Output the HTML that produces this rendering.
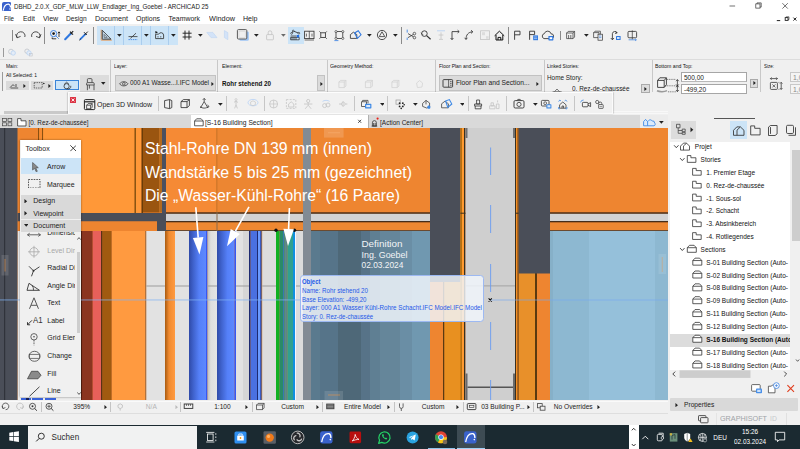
<!DOCTYPE html>
<html><head><meta charset="utf-8"><title>ARCHICAD</title>
<style>
html,body{margin:0;padding:0}
body{width:800px;height:449px;overflow:hidden;position:relative;background:#f0f0f0;font-family:"Liberation Sans",sans-serif}
.t{position:absolute;white-space:nowrap;margin:0;padding:0}
.r{position:absolute;box-sizing:border-box;display:block}
</style></head><body>
<div class="r" style="left:0.00px;top:0.00px;width:800.00px;height:24.00px;background:#ffffff;"></div><div class="r" style="left:0.00px;top:24.00px;width:800.00px;height:91.00px;background:#f0f0f0;"></div><div class="r" style="left:0.00px;top:115.00px;width:668.00px;height:13.00px;background:#d6d6d6;"></div><div class="r" style="left:0.00px;top:400.30px;width:800.00px;height:26.00px;background:#f0f0f0;"></div><div class="r" style="left:0.00px;top:400.60px;width:668.00px;height:0.80px;background:#fafafa;"></div><div class="r" style="left:0.00px;top:412.60px;width:668.00px;height:0.80px;background:#dedede;"></div><div class="r" style="left:0.00px;top:425.40px;width:800.00px;height:23.60px;background:#1b2a31;"></div><svg class="r" style="left:0.00px;top:128.00px;" width="668" height="272" viewBox="0 128 668 272"><defs>
<linearGradient id="gb" x1="0" x2="1" y1="0" y2="0"><stop offset="0" stop-color="#2f4aa8"/><stop offset="0.25" stop-color="#3f62cc"/><stop offset="0.6" stop-color="#5580f8"/><stop offset="1" stop-color="#5d88ff"/></linearGradient>
<linearGradient id="go" x1="0" x2="1" y1="0" y2="0"><stop offset="0" stop-color="#a85a10"/><stop offset="0.4" stop-color="#f08a30"/><stop offset="1" stop-color="#ff9a40"/></linearGradient>
<linearGradient id="gg" x1="0" x2="1" y1="0" y2="0"><stop offset="0" stop-color="#bdbdbd"/><stop offset="0.35" stop-color="#dedede"/><stop offset="1" stop-color="#e4e4e4"/></linearGradient>
</defs><rect x="0" y="128" width="668.00" height="272.00" fill="#ee8530"/><rect x="17.5" y="128" width="20.50" height="103.00" fill="#ee8530"/><rect x="38" y="128" width="1.20" height="85.00" fill="#8a5010"/><rect x="39.2" y="128" width="2.80" height="85.00" fill="#f58a30"/><rect x="42" y="128" width="1.20" height="85.00" fill="#8a5010"/><rect x="43.2" y="128" width="91.30" height="85.00" fill="#ff9838"/><rect x="134.5" y="128" width="1.50" height="85.00" fill="#8a5512"/><rect x="136" y="128" width="5.50" height="85.00" fill="#ff9838"/><rect x="141.5" y="128" width="1.50" height="85.00" fill="#6a3c08"/><rect x="143" y="128" width="16.40" height="84.50" fill="#9a5510"/><rect x="159.4" y="128" width="2.60" height="84.50" fill="#b06a20"/><rect x="162" y="128" width="4.00" height="103.00" fill="#4a5060"/><rect x="166" y="128" width="51.00" height="103.00" fill="#f58a35"/><rect x="216.5" y="128" width="1.00" height="103.00" fill="#b56a22"/><rect x="217.5" y="128" width="85.50" height="103.00" fill="#ec8632"/><rect x="311" y="128" width="119.00" height="103.00" fill="#ee8530"/><rect x="550" y="128" width="118.00" height="103.00" fill="#ee8530"/><rect x="17.5" y="213" width="148.50" height="8.50" fill="#4a4e58"/><rect x="17.5" y="221.5" width="139.50" height="8.50" fill="#ee8530"/><rect x="157" y="213" width="9.00" height="18.00" fill="#4a4e58"/><rect x="166" y="212.4" width="264.00" height="1.40" fill="#2a1c10"/><rect x="166" y="213.8" width="264.00" height="7.40" fill="#d2d2d2"/><rect x="166" y="221.2" width="264.00" height="1.30" fill="#1e1610"/><rect x="166" y="222.5" width="264.00" height="7.50" fill="#ee8832"/><rect x="166" y="230" width="264.00" height="1.00" fill="#6a4a30"/><rect x="550" y="212.4" width="118.00" height="1.40" fill="#2a1c10"/><rect x="550" y="213.8" width="118.00" height="7.40" fill="#d2d2d2"/><rect x="550" y="221.2" width="118.00" height="1.30" fill="#1e1610"/><rect x="550" y="222.5" width="118.00" height="7.50" fill="#ee8832"/><rect x="550" y="230" width="118.00" height="1.00" fill="#6a4a30"/><rect x="216.5" y="212" width="1.00" height="19.00" fill="#8a6a4a"/><rect x="17.5" y="231" width="63.50" height="169.00" fill="#ececec"/><rect x="81" y="231" width="1.00" height="169.00" fill="#5a2010"/><rect x="82" y="231" width="10.75" height="169.00" fill="#8b3520"/><rect x="92.75" y="231" width="8.50" height="169.00" fill="#e8605a"/><rect x="101.25" y="231" width="1.25" height="169.00" fill="#2a1a0a"/><rect x="102.5" y="231" width="8.50" height="169.00" fill="#a05a10"/><rect x="111" y="231" width="0.60" height="169.00" fill="#5a3006"/><rect x="111.6" y="231" width="34.00" height="169.00" fill="#ff9a40"/><rect x="145.6" y="231" width="0.70" height="169.00" fill="#444"/><rect x="146.3" y="231" width="18.70" height="169.00" fill="#e2e2e2"/><rect x="165" y="231" width="10.00" height="169.00" fill="url(#go)"/><rect x="175" y="231" width="14.00" height="169.00" fill="#e2e2e2"/><rect x="189" y="231" width="17.00" height="169.00" fill="url(#gb)"/><rect x="206" y="231" width="1.50" height="169.00" fill="#3558f5"/><rect x="207.5" y="231" width="9.50" height="169.00" fill="url(#gg)"/><rect x="217" y="231" width="17.50" height="169.00" fill="url(#gb)"/><rect x="234.5" y="231" width="1.50" height="169.00" fill="#3558f5"/><rect x="236" y="231" width="7.00" height="169.00" fill="#e2e2e2"/><rect x="243" y="231" width="6.00" height="169.00" fill="#d6d6d6"/><rect x="249" y="231" width="1.60" height="169.00" fill="#1e2a70"/><rect x="250.6" y="231" width="6.40" height="169.00" fill="#4a70e0"/><rect x="257" y="231" width="1.00" height="169.00" fill="#1e2a70"/><rect x="258" y="231" width="2.00" height="169.00" fill="#6a9aff"/><rect x="260" y="231" width="1.60" height="169.00" fill="#3a5ac0"/><rect x="261.6" y="231" width="0.60" height="169.00" fill="#6a5a3a"/><rect x="262.2" y="231" width="13.80" height="169.00" fill="#dcdcdc"/><rect x="276" y="231" width="3.50" height="169.00" fill="#10b020"/><rect x="279.5" y="231" width="3.50" height="169.00" fill="#2a8a68"/><rect x="283" y="231" width="1.20" height="169.00" fill="#3a78b0"/><rect x="284.2" y="231" width="1.20" height="169.00" fill="#2f9080"/><rect x="285.4" y="231" width="1.20" height="169.00" fill="#3a80b8"/><rect x="286.6" y="231" width="0.90" height="169.00" fill="#2f9080"/><rect x="287.5" y="231" width="5.50" height="169.00" fill="#30a090"/><rect x="293" y="231" width="2.00" height="169.00" fill="#1090e0"/><rect x="295" y="231" width="1.00" height="169.00" fill="#f4f4ff"/><rect x="296" y="231" width="7.00" height="169.00" fill="#dcdcdc"/><rect x="311" y="231" width="9.00" height="169.00" fill="#5a7a8e"/><rect x="320" y="231" width="18.00" height="169.00" fill="#567489"/><rect x="338" y="231" width="23.00" height="169.00" fill="#4e6878"/><rect x="361" y="231" width="9.00" height="169.00" fill="#577388"/><rect x="370" y="231" width="10.00" height="169.00" fill="#5f7f93"/><rect x="380" y="231" width="20.00" height="169.00" fill="#65869a"/><rect x="400" y="231" width="12.00" height="169.00" fill="#6a8ea5"/><rect x="412" y="231" width="18.00" height="169.00" fill="#7098b0"/><rect x="430" y="231" width="13.00" height="169.00" fill="#ee8530"/><rect x="443" y="231" width="1.50" height="169.00" fill="#5a3a10"/><rect x="444.5" y="231" width="17.50" height="169.00" fill="#e89020"/><rect x="462" y="231" width="2.00" height="169.00" fill="#ff9a30"/><rect x="518.5" y="231" width="16.50" height="169.00" fill="#e8902a"/><rect x="535" y="231" width="2.00" height="169.00" fill="#5a3a10"/><rect x="537" y="231" width="13.00" height="169.00" fill="#ee8530"/><rect x="550" y="231" width="3.00" height="169.00" fill="#86b0c8"/><rect x="553" y="231" width="36.00" height="169.00" fill="#8db8d1"/><rect x="589" y="231" width="66.00" height="169.00" fill="#95c0da"/><rect x="655" y="231" width="13.00" height="169.00" fill="#8db8d1"/><rect x="0" y="128" width="17.50" height="272.00" fill="#4a4e58"/><rect x="4" y="128" width="1.20" height="272.00" fill="#30333b"/><rect x="303" y="128" width="8.00" height="272.00" fill="#828b94"/><rect x="430" y="128" width="30.40" height="154.00" fill="#4a4e58"/><rect x="460.4" y="128" width="1.60" height="272.00" fill="#b5700f"/><rect x="462" y="128" width="2.00" height="272.00" fill="#ff9a30"/><rect x="464" y="128" width="1.50" height="272.00" fill="#3a3020"/><rect x="465.5" y="128" width="49.50" height="272.00" fill="#cfcfcf"/><rect x="515" y="128" width="1.00" height="272.00" fill="#3a3020"/><rect x="516" y="128" width="1.50" height="272.00" fill="#f59025"/><rect x="517.5" y="128" width="1.10" height="272.00" fill="#6a4210"/><rect x="518.6" y="128" width="31.40" height="145.50" fill="#4a4e58"/><rect x="460.4" y="212.7" width="5.10" height="1.00" fill="#3a3020"/><rect x="515" y="212.7" width="3.60" height="1.00" fill="#3a3020"/><rect x="465.5" y="128" width="2.00" height="10.00" fill="#707070"/><rect x="513" y="128" width="2.00" height="10.00" fill="#707070"/><rect x="465.5" y="373.5" width="2.00" height="26.50" fill="#6a6a6a"/><rect x="513" y="373.5" width="2.00" height="26.50" fill="#6a6a6a"/><rect x="467.5" y="386.5" width="45.50" height="1.50" fill="#555"/><rect x="465.5" y="285.5" width="49.50" height="0.80" fill="#9a9a9a"/><rect x="146.3" y="285.5" width="18.70" height="1.00" fill="#9c9c9c"/><rect x="175" y="285.5" width="14.00" height="1.00" fill="#9c9c9c"/><rect x="207.5" y="285.5" width="9.50" height="1.00" fill="#9c9c9c"/><rect x="236" y="285.5" width="13.00" height="1.00" fill="#9c9c9c"/><rect x="262.2" y="285.5" width="13.80" height="1.00" fill="#9c9c9c"/><rect x="296" y="285.5" width="7.00" height="1.00" fill="#9c9c9c"/><rect x="490.2" y="147.5" width="0.90" height="27.50" fill="#6a9cf0"/><rect x="490.2" y="205" width="0.90" height="28.00" fill="#6a9cf0"/><rect x="490.2" y="264" width="0.90" height="28.00" fill="#6a9cf0"/><rect x="490.2" y="322" width="0.90" height="28.00" fill="#6a9cf0"/><rect x="490.2" y="380" width="0.90" height="20.00" fill="#6a9cf0"/><rect x="324" y="128" width="19.60" height="9.60" fill="rgba(255,255,255,0.16)"/><rect x="328" y="132.4" width="12.00" height="0.80" fill="rgba(255,200,150,0.35)"/><rect x="324.5" y="391" width="18.50" height="9.00" fill="rgba(255,255,255,0.12)"/><rect x="328" y="394.6" width="12.00" height="0.80" fill="rgba(240,150,70,0.7)"/><rect x="1.5" y="255" width="7.00" height="20.50" fill="rgba(255,255,255,0.13)"/><rect x="4.6" y="259" width="0.80" height="12.50" fill="rgba(240,150,70,0.7)"/><rect x="658.5" y="254" width="7.50" height="20.00" fill="rgba(255,255,255,0.10)"/><rect x="661.8" y="257" width="0.80" height="15.00" fill="rgba(240,150,70,0.5)"/><rect x="0" y="299.5" width="300.00" height="0.90" fill="rgba(130,180,245,0.8)"/><rect x="490" y="299.6" width="178.00" height="0.80" fill="rgba(120,170,240,0.8)"/><path d="M488.6 298.4 L491.8 301.6 M491.8 298.4 L488.6 301.6" stroke="#111" stroke-width="1.1"/><circle cx="276" cy="230.3" r="1.7" fill="#111"/><circle cx="294.5" cy="230.3" r="1.7" fill="#111"/><path d="M195.8 207.3 L198.2 237.6" stroke="#fff" stroke-width="1.6"/><path d="M199.5 254.5 L192.9 238.0 L203.4 237.1 Z" fill="#fff"/><path d="M249.0 206.8 L235.3 231.4" stroke="#fff" stroke-width="1.6"/><path d="M227.0 246.3 L230.7 228.9 L239.9 234.0 Z" fill="#fff"/><path d="M289.4 208.0 L288.6 229.0" stroke="#fff" stroke-width="1.6"/><path d="M288.0 246.0 L283.4 228.8 L293.9 229.2 Z" fill="#fff"/></svg><div class="t" style="left:145.30px;top:138.83px;font-size:16.80px;line-height:19.30px;color:#fff;transform:scaleX(0.9434);transform-origin:0 0;">Stahl-Rohre DN 139 mm (innen)</div><div class="t" style="left:145.30px;top:162.53px;font-size:16.80px;line-height:19.30px;color:#fff;transform:scaleX(0.9469);transform-origin:0 0;">Wandstärke 5 bis 25 mm (gezeichnet)</div><div class="t" style="left:145.30px;top:186.23px;font-size:16.80px;line-height:19.30px;color:#fff;transform:scaleX(0.9386);transform-origin:0 0;">Die „Wasser-Kühl-Rohre“ (16 Paare)</div><div class="t" style="left:361.50px;top:237.95px;font-size:9.83px;line-height:11.29px;color:#f2f4f6;">Definition</div><div class="t" style="left:361.50px;top:249.60px;font-size:8.90px;line-height:10.23px;color:#f2f4f6;">Ing. Goebel</div><div class="t" style="left:361.50px;top:260.67px;font-size:8.39px;line-height:9.64px;color:#f2f4f6;">02.03.2024</div><div class="r" style="left:299.50px;top:275.30px;width:184.50px;height:47.20px;background:rgba(242,246,253,0.83);border:1px solid #9db9f2;border-radius:3.5px;"></div><div class="t" style="left:301.90px;top:278.34px;font-size:6.80px;line-height:7.81px;color:#2458e8;font-weight:bold;transform:scaleX(0.8697);transform-origin:0 0;">Object</div><div class="t" style="left:301.90px;top:287.25px;font-size:7.00px;line-height:8.04px;color:#2458e8;transform:scaleX(0.8880);transform-origin:0 0;">Name: Rohr stehend 20</div><div class="t" style="left:301.90px;top:295.55px;font-size:7.00px;line-height:8.04px;color:#2458e8;transform:scaleX(0.8678);transform-origin:0 0;">Base Elevation: -499,20</div><div class="t" style="left:301.90px;top:304.45px;font-size:7.00px;line-height:8.04px;color:#2458e8;transform:scaleX(0.8925);transform-origin:0 0;">Layer: 000 A1 Wasser Kühl-Rohre Schacht.IFC Model.IFC Model</div><div class="t" style="left:301.90px;top:313.05px;font-size:7.00px;line-height:8.04px;color:#2458e8;transform:scaleX(0.8591);transform-origin:0 0;">Story: 0. Rez-de-chaussée</div><div class="r" style="left:20.00px;top:139.50px;width:61.30px;height:257.80px;background:#f0f0f0;box-shadow:0 0 2px rgba(0,0,0,.45);"></div><div class="r" style="left:21.00px;top:397.60px;width:10.00px;height:2.60px;background:#3a62d8;"></div><div class="r" style="left:32.00px;top:397.60px;width:11.00px;height:2.60px;background:#3a62d8;"></div><div class="r" style="left:45.00px;top:397.60px;width:11.00px;height:2.60px;background:#3a62d8;"></div><div class="r" style="left:26.00px;top:397.60px;width:3.00px;height:2.60px;background:#1a2050;"></div><div class="r" style="left:20.50px;top:139.50px;width:60.80px;height:18.50px;background:#ffffff;"></div><div class="t" style="left:25.50px;top:145.15px;font-size:7.00px;line-height:8.04px;color:#222;">Toolbox</div><svg class="r" style="left:69.50px;top:145.00px;" width="6.5" height="6.5" viewBox="0 0 6.5 6.5"><path d="M0.3 0.3 L6.2 6.2 M6.2 0.3 L0.3 6.2" stroke="#333" stroke-width="0.9"/></svg><div class="r" style="left:20.50px;top:158.00px;width:60.80px;height:16.20px;background:#cce4f7;"></div><svg class="r" style="left:31.50px;top:161.50px;" width="7" height="10.5" viewBox="0 0 7 10.5"><path d="M0.6 0.5 L0.6 8 L2.6 6.3 L4.2 9.8 L5.3 9.3 L3.8 5.9 L6.3 5.7 Z" fill="#8a8a8a" stroke="#444" stroke-width="0.6"/></svg><div class="t" style="left:47.00px;top:163.25px;font-size:7.00px;line-height:8.04px;color:#222;">Arrow</div><svg class="r" style="left:28.00px;top:178.50px;" width="12.5" height="9.5" viewBox="0 0 12.5 9.5"><rect x="0.5" y="0.5" width="11.5" height="8.5" fill="none" stroke="#333" stroke-width="0.8" stroke-dasharray="1.6 1"/></svg><div class="t" style="left:47.00px;top:180.55px;font-size:7.00px;line-height:8.04px;color:#222;">Marquee</div><div class="r" style="left:20.50px;top:195.00px;width:60.80px;height:11.90px;background:#d9d9d9;"></div><svg class="r" style="left:24.20px;top:198.75px;" width="3.6" height="4.5" viewBox="0 0 4 5"><path d="M0.5 0 L3.5 2.5 L0.5 5 Z" fill="#222"/></svg><div class="t" style="left:33.30px;top:197.15px;font-size:7.00px;line-height:8.04px;color:#222;">Design</div><div class="r" style="left:20.50px;top:207.40px;width:60.80px;height:11.90px;background:#d9d9d9;"></div><svg class="r" style="left:24.20px;top:211.15px;" width="3.6" height="4.5" viewBox="0 0 4 5"><path d="M0.5 0 L3.5 2.5 L0.5 5 Z" fill="#222"/></svg><div class="t" style="left:33.30px;top:209.55px;font-size:7.00px;line-height:8.04px;color:#222;">Viewpoint</div><div class="r" style="left:20.50px;top:219.80px;width:60.80px;height:11.90px;background:#d9d9d9;"></div><svg class="r" style="left:23.75px;top:224.45px;" width="4.5" height="2.7" viewBox="0 0 5 3"><path d="M0 0 L5 0 L2.5 3 Z" fill="#222"/></svg><div class="t" style="left:33.30px;top:221.95px;font-size:7.00px;line-height:8.04px;color:#222;">Document</div><div class="r" style="left:76.60px;top:252.00px;width:3.20px;height:80.50px;background:#cdcdcd;"></div><svg class="r" style="left:77.00px;top:236.50px;" width="4" height="3" viewBox="0 0 4 3"><path d="M0.3 2.6 L2 0.6 L3.7 2.6" stroke="#333" fill="none" stroke-width="0.8"/></svg><svg class="r" style="left:77.00px;top:391.50px;" width="4" height="3" viewBox="0 0 4 3"><path d="M0.3 0.4 L2 2.4 L3.7 0.4" stroke="#333" fill="none" stroke-width="0.8"/></svg><div class="t" style="left:47.3px;top:229.20px;width:28px;overflow:hidden;font-size:7px;line-height:8px;color:#222">Dimensio</div><div class="t" style="left:47.3px;top:247.10px;width:28px;overflow:hidden;font-size:7px;line-height:8px;color:#a8a8a8">Level Dim</div><div class="t" style="left:47.3px;top:263.90px;width:28px;overflow:hidden;font-size:7px;line-height:8px;color:#222">Radial Di</div><div class="t" style="left:47.3px;top:282.20px;width:28px;overflow:hidden;font-size:7px;line-height:8px;color:#222">Angle Dir</div><div class="t" style="left:47.3px;top:299.10px;width:28px;overflow:hidden;font-size:7px;line-height:8px;color:#222">Text</div><div class="t" style="left:47.3px;top:316.90px;width:28px;overflow:hidden;font-size:7px;line-height:8px;color:#222">Label</div><div class="t" style="left:47.3px;top:333.90px;width:28px;overflow:hidden;font-size:7px;line-height:8px;color:#222">Grid Elem</div><div class="t" style="left:47.3px;top:352.30px;width:28px;overflow:hidden;font-size:7px;line-height:8px;color:#222">Change</div><div class="t" style="left:47.3px;top:369.50px;width:28px;overflow:hidden;font-size:7px;line-height:8px;color:#222">Fill</div><div class="t" style="left:47.3px;top:387.20px;width:28px;overflow:hidden;font-size:7px;line-height:8px;color:#222">Line</div><div class="r" style="left:20.50px;top:219.80px;width:60.80px;height:11.90px;background:#d9d9d9;"></div><svg class="r" style="left:23.75px;top:224.45px;" width="4.5" height="2.7" viewBox="0 0 5 3"><path d="M0 0 L5 0 L2.5 3 Z" fill="#222"/></svg><div class="t" style="left:33.30px;top:221.95px;font-size:7.00px;line-height:8.04px;color:#222;">Document</div><svg class="r" style="left:20.50px;top:231.70px;" width="60.8" height="166.3" viewBox="20.5 231.7 60.8 166.3"><path d="M27 234.5 H40 M27 234.5 l2.2 -1.6 M27 234.5 l2.2 1.6 M40 234.5 l-2.2 -1.6 M40 234.5 l-2.2 1.6" stroke="#555" stroke-width="0.9" fill="none"/><circle cx="33.5" cy="251.5" r="4.2" stroke="#aaa" fill="none" stroke-width="0.8"/><path d="M27.5 251.5 H39.5 M33.5 245.5 V257.5" stroke="#aaa" stroke-width="0.8"/><path d="M28.5 266 L33 270.5 L31 276 M33 270.5 L39 266.5" stroke="#333" stroke-width="0.9" fill="none"/><circle cx="33" cy="270.5" r="1" fill="#333"/><path d="M26.5 290 H39 L28.5 283 Z" stroke="#333" stroke-width="0.9" fill="none"/><path d="M33 290 A6 6 0 0 0 31.5 285.2" stroke="#333" fill="none" stroke-width="0.8"/><path d="M29 308.5 L33.5 297.5 L38 308.5 M30.6 305 H36.4" stroke="#555" stroke-width="1" fill="none"/><path d="M31.5 320 L27 324.5 M27 324.5 v-2.6 M27 324.5 h2.6" stroke="#222" stroke-width="0.9" fill="none"/><circle cx="33.5" cy="336.5" r="3.2" stroke="#444" fill="none" stroke-width="0.8"/><path d="M33.5 339.7 V345" stroke="#444" stroke-width="0.8" stroke-dasharray="1.6 0.8"/><circle cx="33.5" cy="336.5" r="0.8" fill="#444"/><ellipse cx="34" cy="356" rx="5.6" ry="5" stroke="#444" fill="none" stroke-width="0.8"/><rect x="29" y="354" width="10" height="4" fill="#f0f0f0" stroke="#444" stroke-width="0.7"/><path d="M27 378.5 L31 371 H37.5 L40.5 375 L37.5 378.5 Z" fill="#8a8a8a" stroke="#333" stroke-width="0.7"/><path d="M29 396 L39 386.5" stroke="#333" stroke-width="0.9"/></svg><div class="t" style="left:33.00px;top:315.31px;font-size:9.00px;line-height:10.34px;color:#333;transform:scaleX(0.8715);transform-origin:0 0;">A1</div><div class="r" style="left:668.00px;top:115.00px;width:132.00px;height:298.00px;background:#f0f0f0;"></div><div class="r" style="left:670.50px;top:121.00px;width:25.50px;height:17.50px;background:#dcdcdc;"></div><div class="r" style="left:729.80px;top:121.00px;width:17.60px;height:17.50px;background:#cce4f7;"></div><div class="r" style="left:670.00px;top:141.50px;width:120.00px;height:228.50px;background:#ffffff;"></div><div class="r" style="left:790.00px;top:141.50px;width:10.00px;height:228.50px;background:#f0f0f0;"></div><div class="r" style="left:791.50px;top:150.00px;width:8.50px;height:91.00px;background:#cdcdcd;"></div><div class="r" style="left:670.00px;top:334.10px;width:120.00px;height:12.60px;background:#dcdcdc;"></div><div class="r" style="left:714.00px;top:117.50px;width:41.00px;height:0.90px;background:#555;"></div><div class="t" style="left:694.80px;top:143.11px;font-size:6.50px;line-height:7.47px;color:#111;">Projet</div><div class="t" style="left:700.60px;top:155.96px;font-size:6.50px;line-height:7.47px;color:#111;">Stories</div><div class="t" style="left:706.30px;top:168.81px;font-size:6.50px;line-height:7.47px;color:#111;">1. Premier Etage</div><div class="t" style="left:706.30px;top:181.66px;font-size:6.50px;line-height:7.47px;color:#111;">0. Rez-de-chaussée</div><div class="t" style="left:706.30px;top:194.51px;font-size:6.50px;line-height:7.47px;color:#111;">-1. Sous-sol</div><div class="t" style="left:706.30px;top:207.36px;font-size:6.50px;line-height:7.47px;color:#111;">-2. Schacht</div><div class="t" style="left:706.30px;top:220.21px;font-size:6.50px;line-height:7.47px;color:#111;">-3. Absinkbereich</div><div class="t" style="left:706.30px;top:233.06px;font-size:6.50px;line-height:7.47px;color:#111;">-4. Rotliegendes</div><div class="t" style="left:700.60px;top:245.91px;font-size:6.50px;line-height:7.47px;color:#111;">Sections</div><div class="t" style="left:706.30px;top:258.76px;font-size:6.50px;line-height:7.47px;color:#111;width:83.4px;overflow:hidden;padding-bottom:2px;">S-01 Building Section (Auto-</div><div class="t" style="left:706.30px;top:271.61px;font-size:6.50px;line-height:7.47px;color:#111;width:83.4px;overflow:hidden;padding-bottom:2px;">S-02 Building Section (Auto-</div><div class="t" style="left:706.30px;top:284.46px;font-size:6.50px;line-height:7.47px;color:#111;width:83.4px;overflow:hidden;padding-bottom:2px;">S-08 Building Section (Auto-</div><div class="t" style="left:706.30px;top:297.31px;font-size:6.50px;line-height:7.47px;color:#111;width:83.4px;overflow:hidden;padding-bottom:2px;">S-09 Building Section (Auto-</div><div class="t" style="left:706.30px;top:310.16px;font-size:6.50px;line-height:7.47px;color:#111;width:83.4px;overflow:hidden;padding-bottom:2px;">S-11 Building Section (Auto-</div><div class="t" style="left:706.30px;top:323.01px;font-size:6.50px;line-height:7.47px;color:#111;width:83.4px;overflow:hidden;padding-bottom:2px;">S-12 Building Section (Auto-</div><div class="t" style="left:706.30px;top:335.86px;font-size:6.50px;line-height:7.47px;color:#111;font-weight:bold;width:83.4px;overflow:hidden;padding-bottom:2px;">S-16 Building Section (Auto-</div><div class="t" style="left:706.30px;top:348.71px;font-size:6.50px;line-height:7.47px;color:#111;width:83.4px;overflow:hidden;padding-bottom:2px;">S-17 Building Section (Auto-</div><div class="t" style="left:706.30px;top:361.56px;font-size:6.50px;line-height:7.47px;color:#111;width:83.4px;overflow:hidden;padding-bottom:2px;">S-18 Building Section (Auto-</div><svg class="r" style="left:668.00px;top:115.00px;" width="132" height="298" viewBox="668 115 132 298"><path d="M674.0999999999999 145.3 L676.3 147.7 L678.5 145.3" fill="none" stroke="#333" stroke-width="0.9"/><path d="M680.5 150.1 v-4 l3 -3 h3 l3 3 v4 Z M683.5 150.1 v-4.2 l3 -2.6" fill="#fff" stroke="#333" stroke-width="0.8"/><path d="M680.0999999999999 158.15 L682.3 160.54999999999998 L684.5 158.15" fill="none" stroke="#333" stroke-width="0.9"/><path d="M687.3 155.54999999999998 h3.6 v2.2 h5 v4.6 h-8.6 Z" fill="#fff" stroke="#333" stroke-width="0.8"/><path d="M692.6 168.39999999999998 h3.6 v2.2 h5 v4.6 h-8.6 Z" fill="#fff" stroke="#333" stroke-width="0.8"/><path d="M692.6 181.24999999999997 h3.6 v2.2 h5 v4.6 h-8.6 Z" fill="#fff" stroke="#333" stroke-width="0.8"/><path d="M692.6 194.1 h3.6 v2.2 h5 v4.6 h-8.6 Z" fill="#fff" stroke="#333" stroke-width="0.8"/><path d="M692.6 206.95 h3.6 v2.2 h5 v4.6 h-8.6 Z" fill="#fff" stroke="#333" stroke-width="0.8"/><path d="M692.6 219.79999999999998 h3.6 v2.2 h5 v4.6 h-8.6 Z" fill="#fff" stroke="#333" stroke-width="0.8"/><path d="M692.6 232.65 h3.6 v2.2 h5 v4.6 h-8.6 Z" fill="#fff" stroke="#333" stroke-width="0.8"/><path d="M680.0999999999999 248.1 L682.3 250.49999999999997 L684.5 248.1" fill="none" stroke="#333" stroke-width="0.9"/><path d="M687.3 247.7 L689.5 245.29999999999998 h4.6 L696.3 247.7 v4.6 h-9 Z M687.3 247.7 h9" fill="#fff" stroke="#333" stroke-width="0.8"/><path d="M692.8 260.54999999999995 L695.0 258.15 h4.6 L701.8 260.54999999999995 v4.6 h-9 Z M692.8 260.54999999999995 h9" fill="#fff" stroke="#333" stroke-width="0.8"/><path d="M692.8 273.4 L695.0 271.0 h4.6 L701.8 273.4 v4.6 h-9 Z M692.8 273.4 h9" fill="#fff" stroke="#333" stroke-width="0.8"/><path d="M692.8 286.24999999999994 L695.0 283.84999999999997 h4.6 L701.8 286.24999999999994 v4.6 h-9 Z M692.8 286.24999999999994 h9" fill="#fff" stroke="#333" stroke-width="0.8"/><path d="M692.8 299.0999999999999 L695.0 296.69999999999993 h4.6 L701.8 299.0999999999999 v4.6 h-9 Z M692.8 299.0999999999999 h9" fill="#fff" stroke="#333" stroke-width="0.8"/><path d="M692.8 311.94999999999993 L695.0 309.54999999999995 h4.6 L701.8 311.94999999999993 v4.6 h-9 Z M692.8 311.94999999999993 h9" fill="#fff" stroke="#333" stroke-width="0.8"/><path d="M692.8 324.79999999999995 L695.0 322.4 h4.6 L701.8 324.79999999999995 v4.6 h-9 Z M692.8 324.79999999999995 h9" fill="#fff" stroke="#333" stroke-width="0.8"/><path d="M692.8 337.65 L695.0 335.25 h4.6 L701.8 337.65 v4.6 h-9 Z M692.8 337.65 h9" fill="#fff" stroke="#333" stroke-width="0.8"/><path d="M692.8 350.49999999999994 L695.0 348.09999999999997 h4.6 L701.8 350.49999999999994 v4.6 h-9 Z M692.8 350.49999999999994 h9" fill="#fff" stroke="#333" stroke-width="0.8"/><path d="M692.8 363.3499999999999 L695.0 360.94999999999993 h4.6 L701.8 363.3499999999999 v4.6 h-9 Z M692.8 363.3499999999999 h9" fill="#fff" stroke="#333" stroke-width="0.8"/><g transform="translate(0,-9.7)"><path d="M676.5 134 h3.5 v3.5 h-3.5 Z M678.2 137.5 v5.5 h4 M678.2 140.2 h4 M682.2 138.8 h3 v2.6 h-3 Z M682.2 142 h3 v2 h-3 Z" fill="none" stroke="#333" stroke-width="0.7"/><path d="M690.5 137 L693.3 139.5 L690.5 142 Z" fill="#222"/><path d="M733.5 145 v-5 l3.3 -3.4 h3.6 l3.6 3.4 v5 Z M737 145 v-5.2 l3.2 -3" fill="none" stroke="#333" stroke-width="0.85"/><path d="M750.7 135.6 h4 v2.4 h5.4 v6.6 h-9.4 Z" fill="none" stroke="#333" stroke-width="0.85"/><path d="M768.5 136.8 l2 -1.6 h6.6 v8.4 l-2 1.6 h-6.6 Z M770.5 143.6 v-6.8" fill="none" stroke="#333" stroke-width="0.85"/><rect x="786.5" y="135" width="7" height="8.2" rx="1.2" fill="none" stroke="#333" stroke-width="0.85"/><path d="M788.5 145 h7 v-8" fill="none" stroke="#333" stroke-width="0.85"/></g><path d="M675.2 371.6 L672.8 374 L675.2 376.4 M784.2 371.6 L786.6 374 L784.2 376.4" fill="none" stroke="#333" stroke-width="0.9"/><path d="M796 359.5 l1.6 1.8 l1.6 -1.8" fill="none" stroke="#333" stroke-width="0.8"/><rect x="679.5" y="370.3" width="71" height="7.6" fill="#cdcdcd"/><rect x="751.6" y="384.6" width="8.6" height="6.6" rx="0.8" fill="#fff" stroke="#444" stroke-width="0.8"/><rect x="756" y="388.6" width="6" height="4.6" rx="0.8" fill="#4a90e8"/><rect x="757.2" y="389.8" width="3.4" height="2.2" fill="#cfe3fa"/><path d="M768.4 386.2 h3 l1 -1.2 h2.6 v7.8 h-6.6 Z" fill="#fff" stroke="#444" stroke-width="0.8"/><circle cx="776.4" cy="385.6" r="2.9" fill="#fff" stroke="#3a80e0" stroke-width="0.8"/><path d="M774.9 385.6 h3 M776.4 384.1 v3" stroke="#3a80e0" stroke-width="0.7"/><path d="M787.4 385.2 L794 391.8 M794 385.2 L787.4 391.8" stroke="#e03c1c" stroke-width="1.1"/></svg><div class="r" style="left:670.30px;top:398.30px;width:128.00px;height:12.70px;background:#d9d9d9;border-radius:1px;"></div><svg class="r" style="left:674.90px;top:402.57px;" width="3.4" height="4.25" viewBox="0 0 4 5"><path d="M0.5 0 L3.5 2.5 L0.5 5 Z" fill="#222"/></svg><div class="t" style="left:683.80px;top:400.93px;font-size:6.70px;line-height:7.70px;color:#222;transform:scaleX(0.9907);transform-origin:0 0;">Properties</div><svg class="r" style="left:697.60px;top:414.60px;" width="12" height="9" viewBox="0 0 12 9"><rect x="0.5" y="0.6" width="7.4" height="5.2" rx="0.6" fill="#f0f0f0" stroke="#444" stroke-width="0.9"/><rect x="2.6" y="2.6" width="7.4" height="5.2" rx="0.6" fill="#f0f0f0" stroke="#444" stroke-width="0.9"/></svg><div class="t" style="left:720.00px;top:414.97px;font-size:7.20px;line-height:8.27px;color:#a0a4a8;transform:scaleX(1.0057);transform-origin:0 0;">GRAPHISOFT</div><div class="t" style="left:770.30px;top:414.97px;font-size:7.20px;line-height:8.27px;color:#c6c9cc;transform:scaleX(0.9461);transform-origin:0 0;">ID</div><div class="r" style="left:716.00px;top:413.00px;width:0.80px;height:12.00px;background:#e4e4e4;"></div><div class="r" style="left:786.00px;top:413.00px;width:0.80px;height:12.00px;background:#e0e0e0;"></div><svg class="r" style="left:0.00px;top:400.80px;" width="668" height="12" viewBox="0 400 668 12"><path d="M3 407.5 a3.3 3.3 0 1 1 2.6 1.2 M2.2 405 l0.8 2.6 l2.4 -1" fill="none" stroke="#444" stroke-width="0.8"/><path d="M22.5 407.5 a3.3 3.3 0 1 0 -2.6 1.2 M23.3 405 l-0.8 2.6 l-2.4 -1" fill="none" stroke="#bbb" stroke-width="0.8"/><circle cx="32.5" cy="405.3" r="3" fill="none" stroke="#333" stroke-width="0.8"/><path d="M34.7 407.5 l2.2 2.2" stroke="#333" stroke-width="1"/><circle cx="32.5" cy="405.3" r="1" fill="#333"/><circle cx="49" cy="405.3" r="3" fill="none" stroke="#333" stroke-width="0.8"/><path d="M51.2 407.5 l2.2 2.2" stroke="#333" stroke-width="1"/><path d="M47.2 405.3 h3.6 M49 403.5 v3.6" stroke="#333" stroke-width="0.7"/><path d="M118 404 l2.2 -1.2 l2.2 1.2 v2.4 l-2.2 1.2 l-2.2 -1.2 Z M120.2 407.6 v2" fill="none" stroke="#bbb" stroke-width="0.8"/><rect x="184.2" y="403" width="8.6" height="4.4" fill="none" stroke="#333" stroke-width="0.9"/><path d="M186.5 403 v2 M188.5 403 v2 M190.5 403 v2" stroke="#333" stroke-width="0.6"/><path d="M256.5 404 l1.6 -1.6 h6 v4.6 l-1.6 1.6 h-6 Z M256.5 404 h6 v4.6 M262.5 404 l1.6 -1.6" fill="none" stroke="#333" stroke-width="0.7"/><rect x="326.2" y="402.6" width="8.2" height="5.6" fill="#444"/><path d="M327.2 404 h6.2 M327.2 405.4 h6.2 M327.2 406.8 h6.2" stroke="#ddd" stroke-width="0.5"/><path d="M399.5 402.4 v3.2 a1.8 1.8 0 0 0 3.6 0 v-3.2 M401.3 407.4 v2.6" fill="none" stroke="#444" stroke-width="0.8"/><rect x="467.3" y="402.6" width="8.6" height="6" rx="0.8" fill="none" stroke="#333" stroke-width="0.9"/><rect x="469.3" y="404.6" width="4.6" height="2" fill="none" stroke="#333" stroke-width="0.6"/><rect x="537.6" y="402.6" width="4.6" height="4.2" fill="none" stroke="#444" stroke-width="0.8"/><rect x="540.2" y="405.2" width="4.8" height="4" fill="#f0f0f0" stroke="#444" stroke-width="0.8"/></svg><div class="r" style="left:41.00px;top:401.80px;width:1.00px;height:10.20px;background:#c4c4c4;"></div><div class="r" style="left:110.00px;top:401.80px;width:1.00px;height:10.20px;background:#c4c4c4;"></div><div class="r" style="left:179.80px;top:401.80px;width:1.00px;height:10.20px;background:#c4c4c4;"></div><div class="r" style="left:251.70px;top:401.80px;width:1.00px;height:10.20px;background:#c4c4c4;"></div><div class="r" style="left:321.80px;top:401.80px;width:1.00px;height:10.20px;background:#c4c4c4;"></div><div class="r" style="left:393.50px;top:401.80px;width:1.00px;height:10.20px;background:#c4c4c4;"></div><div class="r" style="left:463.00px;top:401.80px;width:1.00px;height:10.20px;background:#c4c4c4;"></div><div class="r" style="left:533.30px;top:401.80px;width:1.00px;height:10.20px;background:#c4c4c4;"></div><div class="t" style="left:73.30px;top:403.22px;font-size:6.60px;line-height:7.58px;color:#222;">395%</div><div class="t" style="left:145.80px;top:403.22px;font-size:6.60px;line-height:7.58px;color:#b4b4b4;">N/A</div><div class="t" style="left:214.20px;top:403.22px;font-size:6.60px;line-height:7.58px;color:#222;">1:100</div><div class="t" style="left:281.20px;top:403.22px;font-size:6.60px;line-height:7.58px;color:#222;">Custom</div><div class="t" style="left:344.00px;top:403.22px;font-size:6.60px;line-height:7.58px;color:#222;">Entire Model</div><div class="t" style="left:421.80px;top:403.22px;font-size:6.60px;line-height:7.58px;color:#222;">Custom</div><div class="t" style="left:481.20px;top:403.22px;font-size:6.60px;line-height:7.58px;color:#222;">03 Building P...</div><div class="t" style="left:553.80px;top:403.22px;font-size:6.60px;line-height:7.58px;color:#222;">No Overrides</div><svg class="r" style="left:104.10px;top:404.68px;" width="3.4" height="4.25" viewBox="0 0 4 5"><path d="M0.5 0 L3.5 2.5 L0.5 5 Z" fill="#222"/></svg><svg class="r" style="left:174.60px;top:404.68px;" width="3.4" height="4.25" viewBox="0 0 4 5"><path d="M0.5 0 L3.5 2.5 L0.5 5 Z" fill="#bbb"/></svg><svg class="r" style="left:245.30px;top:404.68px;" width="3.4" height="4.25" viewBox="0 0 4 5"><path d="M0.5 0 L3.5 2.5 L0.5 5 Z" fill="#222"/></svg><svg class="r" style="left:315.80px;top:404.68px;" width="3.4" height="4.25" viewBox="0 0 4 5"><path d="M0.5 0 L3.5 2.5 L0.5 5 Z" fill="#222"/></svg><svg class="r" style="left:387.10px;top:404.68px;" width="3.4" height="4.25" viewBox="0 0 4 5"><path d="M0.5 0 L3.5 2.5 L0.5 5 Z" fill="#222"/></svg><svg class="r" style="left:456.30px;top:404.68px;" width="3.4" height="4.25" viewBox="0 0 4 5"><path d="M0.5 0 L3.5 2.5 L0.5 5 Z" fill="#222"/></svg><svg class="r" style="left:526.80px;top:404.68px;" width="3.4" height="4.25" viewBox="0 0 4 5"><path d="M0.5 0 L3.5 2.5 L0.5 5 Z" fill="#222"/></svg><svg class="r" style="left:597.10px;top:404.68px;" width="3.4" height="4.25" viewBox="0 0 4 5"><path d="M0.5 0 L3.5 2.5 L0.5 5 Z" fill="#222"/></svg><div class="r" style="left:28.30px;top:425.60px;width:169.00px;height:23.40px;background:#f1f2f2;"></div><div class="r" style="left:629.20px;top:425.40px;width:9.40px;height:23.60px;background:#ffffff;"></div><div class="r" style="left:456.50px;top:425.40px;width:28.00px;height:23.60px;background:#3d4b53;"></div><div class="r" style="left:456.50px;top:447.50px;width:28.00px;height:1.50px;background:#9fd0f5;"></div><div class="r" style="left:428.00px;top:447.50px;width:27.00px;height:1.50px;background:#8fc3ea;"></div><svg class="r" style="left:0.00px;top:422.70px;" width="800" height="27" viewBox="0 422 800 27"><path d="M9.3 431.7 l4 -0.6 v4.2 h-4 Z M13.9 431 l5 -0.8 v5.1 h-5 Z M9.3 435.9 h4 v4.2 l-4 -0.6 Z M13.9 435.9 h5 v5.1 l-5 -0.8 Z" fill="#fff"/><circle cx="41.3" cy="435.2" r="3" fill="none" stroke="#222" stroke-width="0.9"/><path d="M39.2 437.4 l-3 3" stroke="#222" stroke-width="1"/><rect x="207.5" y="433" width="5.6" height="6.4" fill="none" stroke="#fff" stroke-width="0.8"/><path d="M206.2 431.4 h8.2 M206.2 441 h8.2 M215.8 432.2 v1.6 M215.8 435.4 v1.6 M215.8 438.6 v1.6" stroke="#fff" stroke-width="0.8"/><rect x="234.5" y="430.5" width="12" height="12" rx="1.6" fill="#2f8ff0"/><rect x="237.2" y="434.4" width="6.6" height="5.2" rx="0.6" fill="#fff"/><path d="M238.8 434.4 v-1.4 h3.4 v1.4" fill="none" stroke="#fff" stroke-width="0.8"/><rect x="239.8" y="436" width="1.4" height="2" fill="#f5a020"/><rect x="263.5" y="430.3" width="12.4" height="12.4" rx="1.2" fill="#5a5f66"/><circle cx="269.7" cy="436.6" r="4.2" fill="#f07a1a"/><circle cx="268.5" cy="435.4" r="1.6" fill="#ffb060"/><circle cx="297.7" cy="436.4" r="6.3" fill="#26282c" stroke="#c8c8c8" stroke-width="0.9"/><path d="M297.7 436.4 m-0.4 -4.2 a2.6 2.6 0 0 1 2.6 3.6 M297.7 436.4 m3.8 1.8 a2.6 2.6 0 0 1 -4.4 0.6 M297.7 436.4 m-3.4 2.4 a2.6 2.6 0 0 1 1.6 -4.2" fill="none" stroke="#c8c8c8" stroke-width="1.3" stroke-linecap="round"/><rect x="320.1" y="430.2" width="12.4" height="12.4" rx="2.4" fill="#3a62cc"/><path d="M321.7 441 C322.7 435 325.7 432.2 328.90000000000003 432.6 C330.3 433 330.90000000000003 434.6 330.90000000000003 437" fill="none" stroke="#fff" stroke-width="1.3"/><circle cx="330.3" cy="438.6" r="0.8" fill="#fff"/><rect x="349.5" y="430.6" width="11.6" height="11.6" rx="1.4" fill="#b80f0f"/><path d="M352.2 440 c1.4 -1 2.8 -4 3 -6.6 c0.4 2.4 1.8 4.4 3.8 5 c-2.2 0 -4.6 0.6 -6.8 1.6 Z" fill="none" stroke="#fff" stroke-width="0.8"/><path d="M378.6 442.4 l1 -3.2 a5.6 5.6 0 1 1 2.2 2.2 Z" fill="#1b2a31" stroke="#25d366" stroke-width="1.2" stroke-linejoin="round"/><path d="M382.1 433.6 c-0.5 2 2 4.8 4.3 4.9 l0.9 -1 l-1.3 -0.9 l-0.7 0.5 c-0.9 -0.3 -1.6 -1.2 -1.9 -2 l0.6 -0.5 l-0.7 -1.5 Z" fill="#25d366"/><circle cx="412.6" cy="436.4" r="6" fill="#2aa3e0"/><path d="M408.8 436.3 l7 -2.8 l-1.2 6 l-2.2 -1.6 l-1.1 1.1 l-0.1 -1.8 l3.1 -2.9 l-3.9 2.4 Z" fill="#fff"/><circle cx="441" cy="436.2" r="6" fill="#e04434"/><path d="M441 436.2 L435.8 433.2 A6 6 0 0 0 438 441.4 Z" fill="#2ea452"/><path d="M441 436.2 L438 441.4 A6 6 0 0 0 447 436.2 Z" fill="#f5c518"/><circle cx="441" cy="436.2" r="2.7" fill="#fff"/><circle cx="441" cy="436.2" r="2.1" fill="#4a8af0"/><circle cx="445" cy="441" r="2.3" fill="#7a6a5a"/><rect x="464.1" y="430.2" width="12.4" height="12.4" rx="2.4" fill="#3a62cc"/><path d="M465.7 441 C466.7 435 469.7 432.2 472.90000000000003 432.6 C474.3 433 474.90000000000003 434.6 474.90000000000003 437" fill="none" stroke="#fff" stroke-width="1.3"/><circle cx="474.3" cy="438.6" r="0.8" fill="#fff"/><path d="M631.8 429.3 l1.9 -2 l1.9 2 M631.8 443 l1.9 2 l1.9 -2" fill="none" stroke="#222" stroke-width="0.9"/><path d="M642.3 438.2 l3 -3 l3 3" fill="none" stroke="#fff" stroke-width="0.9"/><rect x="657.3" y="433.4" width="5" height="6.4" rx="1" fill="none" stroke="#fff" stroke-width="0.8"/><path d="M658.6 432.2 h4.6 v5.6" fill="none" stroke="#fff" stroke-width="0.8"/><circle cx="662.4" cy="437" r="1.3" fill="#1b2a31" stroke="#fff" stroke-width="0.6"/><rect x="669.8" y="432.2" width="7.6" height="8.4" fill="#6a8f7a"/><path d="M672 438.6 v-4.2 l3 -0.8 v4.2" fill="none" stroke="#1b2a31" stroke-width="0.7"/><rect x="669.8" y="432.2" width="2.2" height="2.2" fill="#c8b040"/><path d="M684.2 433 l3 -1.2 l3 1.2 v3.6 c0 2 -1.6 3.4 -3 4 c-1.4 -0.6 -3 -2 -3 -4 Z" fill="#fff"/><path d="M687.2 431.8 v8.8" stroke="#1b2a31" stroke-width="0.5"/><path d="M688.2 441 l2.2 -3.8 l2.2 3.8 Z" fill="#f5c020"/><circle cx="702.4" cy="436.4" r="4" fill="none" stroke="#fff" stroke-width="0.8"/><path d="M698.4 436.4 h8 M702.4 432.4 v8 M700 433.4 c1.4 2 1.4 4 0 6 M704.8 433.4 c-1.4 2 -1.4 4 0 6" fill="none" stroke="#fff" stroke-width="0.6"/><circle cx="705" cy="439.4" r="1.6" fill="#1b2a31" stroke="#fff" stroke-width="0.5"/><path d="M775.3 431.3 h9.4 v7.6 h-5.6 l-1.6 1.8 v-1.8 h-2.2 Z" fill="none" stroke="#fff" stroke-width="0.85"/></svg><div class="t" style="left:51.60px;top:432.90px;font-size:8.14px;line-height:9.35px;color:#2a2a2a;">Suchen</div><div class="t" style="left:713.30px;top:433.67px;font-size:6.44px;line-height:7.40px;color:#fff;">DEU</div><div class="t" style="left:741.80px;top:427.68px;font-size:7.30px;line-height:8.39px;color:#fff;transform:scaleX(0.8869);transform-origin:0 0;">15:26</div><div class="t" style="left:734.00px;top:438.18px;font-size:7.30px;line-height:8.39px;color:#fff;transform:scaleX(0.8760);transform-origin:0 0;">02.03.2024</div><svg class="r" style="left:1.80px;top:1.80px;" width="9.6" height="9.6" viewBox="0 0 9.6 9.6"><rect x="0" y="0" width="9.6" height="9.6" rx="2" fill="#3a62cc"/><path d="M1.2 8.6 C2 4.2 4 2 6.6 2.2 C8 2.5 8.5 3.8 8.5 5.6" fill="none" stroke="#fff" stroke-width="1.2"/><circle cx="8" cy="7" r="0.7" fill="#fff"/></svg><div class="t" style="left:13.60px;top:3.15px;font-size:7.00px;line-height:8.04px;color:#222;transform:scaleX(0.8827);transform-origin:0 0;">DBHD_2.0.X_GDF_MLW_LLW_Endlager_Ing_Goebel - ARCHICAD 25</div><svg class="r" style="left:726.00px;top:0.00px;" width="70" height="14" viewBox="726 0 70 14"><path d="M729.5 6 h5.6" stroke="#333" stroke-width="0.7"/><rect x="755.8" y="3.9" width="4.2" height="4.2" fill="none" stroke="#333" stroke-width="0.7"/><path d="M757 3.9 v-1 h4.2 v4.2 h-1.2" fill="none" stroke="#333" stroke-width="0.7"/><path d="M782.4 3.2 l5.4 5.4 M787.8 3.2 l-5.4 5.4" stroke="#333" stroke-width="0.7"/></svg><svg class="r" style="left:774.00px;top:15.00px;" width="26" height="9" viewBox="774 15 26 9"><path d="M776.8 20.6 h3.4" stroke="#222" stroke-width="1"/><rect x="785.2" y="17.6" width="2.8" height="2.8" fill="none" stroke="#222" stroke-width="0.9"/><path d="M786.2 17.6 v-0.8 h2.8 v2.8 h-1" fill="none" stroke="#222" stroke-width="0.6"/><path d="M793.4 17.6 l3 3 M796.4 17.6 l-3 3" stroke="#222" stroke-width="1"/></svg><div class="t" style="left:4.20px;top:15.15px;font-size:6.90px;line-height:7.93px;color:#222;transform:scaleX(0.9001);transform-origin:0 0;">File</div><div class="t" style="left:22.90px;top:15.15px;font-size:6.90px;line-height:7.93px;color:#222;transform:scaleX(0.9937);transform-origin:0 0;">Edit</div><div class="t" style="left:42.60px;top:15.15px;font-size:6.90px;line-height:7.93px;color:#222;transform:scaleX(1.0262);transform-origin:0 0;">View</div><div class="t" style="left:65.70px;top:15.15px;font-size:6.90px;line-height:7.93px;color:#222;transform:scaleX(0.9602);transform-origin:0 0;">Design</div><div class="t" style="left:95.00px;top:15.15px;font-size:6.90px;line-height:7.93px;color:#222;transform:scaleX(1.0507);transform-origin:0 0;">Document</div><div class="t" style="left:136.20px;top:15.15px;font-size:6.90px;line-height:7.93px;color:#222;transform:scaleX(1.0105);transform-origin:0 0;">Options</div><div class="t" style="left:168.60px;top:15.15px;font-size:6.90px;line-height:7.93px;color:#222;">Teamwork</div><div class="t" style="left:208.50px;top:15.15px;font-size:6.90px;line-height:7.93px;color:#222;transform:scaleX(1.0605);transform-origin:0 0;">Window</div><div class="t" style="left:242.50px;top:15.15px;font-size:6.90px;line-height:7.93px;color:#222;transform:scaleX(1.0232);transform-origin:0 0;">Help</div><div class="r" style="left:97.00px;top:26.00px;width:80.50px;height:18.50px;background:#cce4f7;"></div><div class="r" style="left:288.00px;top:26.50px;width:15.50px;height:17.50px;background:#cce4f7;"></div><div class="r" style="left:114.10px;top:26.00px;width:0.60px;height:18.50px;background:#aacdee;"></div><div class="r" style="left:123.40px;top:26.00px;width:0.60px;height:18.50px;background:#aacdee;"></div><div class="r" style="left:141.40px;top:26.00px;width:0.60px;height:18.50px;background:#aacdee;"></div><div class="r" style="left:150.40px;top:26.00px;width:0.60px;height:18.50px;background:#aacdee;"></div><div class="r" style="left:168.10px;top:26.00px;width:0.60px;height:18.50px;background:#aacdee;"></div><div class="r" style="left:12.00px;top:30.00px;width:1.00px;height:10.50px;background:#8a8a8a;"></div><div class="r" style="left:44.00px;top:27.00px;width:1.00px;height:16.50px;background:#8a8a8a;"></div><div class="r" style="left:92.70px;top:27.00px;width:1.00px;height:16.50px;background:#8a8a8a;"></div><div class="r" style="left:401.30px;top:27.00px;width:1.00px;height:16.50px;background:#8a8a8a;"></div><div class="r" style="left:507.80px;top:27.00px;width:1.00px;height:16.50px;background:#8a8a8a;"></div><div class="r" style="left:559.80px;top:31.00px;width:1.00px;height:8.50px;background:#8a8a8a;"></div><svg class="r" style="left:116.92px;top:33.78px;" width="4.75" height="2.8499999999999996" viewBox="0 0 5 3"><path d="M0 0 L5 0 L2.5 3 Z" fill="#222"/></svg><svg class="r" style="left:143.93px;top:33.78px;" width="4.75" height="2.8499999999999996" viewBox="0 0 5 3"><path d="M0 0 L5 0 L2.5 3 Z" fill="#222"/></svg><svg class="r" style="left:170.93px;top:33.78px;" width="4.75" height="2.8499999999999996" viewBox="0 0 5 3"><path d="M0 0 L5 0 L2.5 3 Z" fill="#222"/></svg><svg class="r" style="left:198.12px;top:33.78px;" width="4.75" height="2.8499999999999996" viewBox="0 0 5 3"><path d="M0 0 L5 0 L2.5 3 Z" fill="#222"/></svg><svg class="r" style="left:253.93px;top:33.78px;" width="4.75" height="2.8499999999999996" viewBox="0 0 5 3"><path d="M0 0 L5 0 L2.5 3 Z" fill="#222"/></svg><svg class="r" style="left:366.93px;top:33.78px;" width="4.75" height="2.8499999999999996" viewBox="0 0 5 3"><path d="M0 0 L5 0 L2.5 3 Z" fill="#222"/></svg><svg class="r" style="left:393.23px;top:33.78px;" width="4.75" height="2.8499999999999996" viewBox="0 0 5 3"><path d="M0 0 L5 0 L2.5 3 Z" fill="#222"/></svg><svg class="r" style="left:584.12px;top:33.78px;" width="4.75" height="2.8499999999999996" viewBox="0 0 5 3"><path d="M0 0 L5 0 L2.5 3 Z" fill="#222"/></svg><svg class="r" style="left:280.93px;top:33.78px;" width="4.75" height="2.8499999999999996" viewBox="0 0 5 3"><path d="M0 0 L5 0 L2.5 3 Z" fill="#6a6a6a"/></svg><svg class="r" style="left:0.00px;top:24.00px;" width="668" height="22" viewBox="0 24 668 22"><path d="M17.2 37.6 a4.2 3.9 0 1 1 7.6 -0.6 M15.6 34.2 l1.4 3.6 l3.6 -1.4" fill="none" stroke="#333" stroke-width="0.85"/><path d="M39.4 37.6 a4.2 3.9 0 1 0 -7.6 -0.6 M41 34.2 l-1.4 3.6 l-3.6 -1.4" fill="none" stroke="#333" stroke-width="0.85"/><circle cx="53.6" cy="33.6" r="3.1" fill="none" stroke="#2f78e0" stroke-width="0.9"/><circle cx="53.6" cy="33.6" r="1.3" fill="#111"/><path d="M55.8 35.8 l3 3" stroke="#2f78e0" stroke-width="0.8"/><path d="M52.2 38.8 h4 M52.2 37.4 v1.6 M59 32 v5 M58 33.2 l1 -1.4 l1 1.4" fill="none" stroke="#111" stroke-width="0.8"/><path d="M65.2 39.2 l5.6 -5.6" stroke="#2f78e0" stroke-width="2.1" stroke-linecap="round"/><path d="M70.6 33.8 l2.6 -2.6 M70 31.6 l3 3" stroke="#222" stroke-width="1.2"/><path d="M80.4 39.2 l5 -5" stroke="#2f78e0" stroke-width="1.9" stroke-linecap="round"/><path d="M84.6 34.8 l3.2 -3.2 M84 32.2 l2.8 2.8 M79.4 40.2 l1.2 -1.2" stroke="#222" stroke-width="1"/><path d="M101.2 40.2 V29.6 M101.2 40.2 H111.8" stroke="#e89a58" stroke-width="0.9" fill="none"/><path d="M102.2 39.2 V30.2 L111 39.2 Z" fill="none" stroke="#3a3a3a" stroke-width="0.9"/><path d="M104.2 37.4 v-3 l3 3 Z" fill="none" stroke="#3a3a3a" stroke-width="0.6"/><path d="M102.2 33 h1.2 M102.2 35 h1.2 M102.2 37 h1.2 M105 39.2 v-1 M107 39.2 v-1 M109 39.2 v-1" stroke="#3a3a3a" stroke-width="0.5"/><path d="M128.5 36.6 h9 M130.4 38.4 l5.6 -5.2" stroke="#333" stroke-width="0.8"/><path d="M128.5 39.6 h9" stroke="#2f78e0" stroke-width="0.8" stroke-dasharray="1.4 0.8"/><path d="M155.6 34.2 h3 a2.6 2.4 0 0 1 5 0.8 v3.6 h-8 Z" fill="none" stroke="#333" stroke-width="0.85"/><path d="M155.4 31 l2.6 1.3 l-2.6 1.3 Z" fill="#111"/><circle cx="158" cy="36.8" r="0.6" fill="#333"/><circle cx="160.8" cy="36.8" r="0.6" fill="#333"/><path d="M182.6 33.2 h9 M182.6 37 h9 M185 30.6 v9 M189 30.6 v9" stroke="#222" stroke-width="0.95"/><path d="M206.8 32.4 h6 l4.2 5.2 h-6 Z" fill="#d3e3f8" stroke="#bcd3f2" stroke-width="0.6"/><path d="M224.4 30.6 l3.4 2 v7 l-3.4 -2 Z" fill="#d3e3f8" stroke="#bcd3f2" stroke-width="0.6"/><rect x="239.4" y="31.4" width="9.4" height="9.4" rx="1.4" fill="#9cc4f5"/><rect x="237.4" y="29.6" width="9.4" height="9.4" rx="1" fill="#efefef" stroke="#5a5a5a" stroke-width="1"/><rect x="239" y="31.2" width="6.2" height="6.2" fill="none" stroke="#d0d0d0" stroke-width="0.5"/><rect x="266.6" y="34.6" width="6.8" height="5.2" rx="0.6" fill="none" stroke="#c4c4c4" stroke-width="0.85"/><path d="M268.2 34.6 v-2 a1.8 1.8 0 0 1 3.6 0 v2" fill="none" stroke="#c4c4c4" stroke-width="0.85"/><path d="M291.6 33.4 l1.6 -2.4 l5.6 2.2" fill="none" stroke="#222" stroke-width="0.8"/><circle cx="291.6" cy="33.4" r="0.9" fill="#cce4f7" stroke="#222" stroke-width="0.6"/><circle cx="293.2" cy="31" r="0.9" fill="#cce4f7" stroke="#222" stroke-width="0.6"/><circle cx="298.8" cy="33.2" r="0.9" fill="#cce4f7" stroke="#222" stroke-width="0.6"/><path d="M290.6 36 h6 M290.6 37.4 h8.6 v2.4 h-8.6 Z M292 37.4 v2.4 M294 37.4 v2.4 M296 37.4 v2.4" fill="none" stroke="#222" stroke-width="0.7"/><rect x="296.8" y="35" width="2.4" height="2.4" fill="#1f6fe8"/><rect x="304.6" y="31.2" width="9.4" height="7.4" fill="none" stroke="#333" stroke-width="0.85"/><path d="M309.3 31.2 v7.4 M306.4 33.6 v3 M312 33.6 v3 M304.6 40 h9.4" stroke="#333" stroke-width="0.7"/><rect x="320.8" y="32.8" width="4.6" height="4.6" fill="none" stroke="#333" stroke-width="0.85"/><path d="M319.4 31.4 l1.4 1.4 M326.8 31.4 l-1.4 1.4 M319.4 38.8 l1.4 -1.4 M326.8 38.8 l-1.4 -1.4" stroke="#333" stroke-width="0.8"/><rect x="336" y="31.6" width="6.8" height="6.8" fill="none" stroke="#333" stroke-width="0.8"/><circle cx="336" cy="31.6" r="1.1" fill="#f0f0f0" stroke="#333" stroke-width="0.6"/><circle cx="342.8" cy="31.6" r="1.1" fill="#f0f0f0" stroke="#333" stroke-width="0.6"/><circle cx="336" cy="38.4" r="1.1" fill="#f0f0f0" stroke="#333" stroke-width="0.6"/><circle cx="342.8" cy="38.4" r="1.1" fill="#f0f0f0" stroke="#333" stroke-width="0.6"/><path d="M334.4 40.6 h4" stroke="#2f78e0" stroke-width="0.8"/><path d="M350.4 34.6 l3 -2.4 l3.4 2.4 v3.8 h-6.4 Z" fill="none" stroke="#333" stroke-width="0.85"/><path d="M354.6 33 l3.6 -2.2 l2.8 4 l-3.6 3.6 Z" fill="none" stroke="#2f78e0" stroke-width="1.1"/><circle cx="382" cy="35" r="4.6" fill="none" stroke="#333" stroke-width="0.85"/><path d="M382 31.8 l2.8 4.8 h-5.6 Z" fill="none" stroke="#333" stroke-width="0.8"/><circle cx="414.4" cy="37.6" r="1.3" fill="none" stroke="#333" stroke-width="0.7"/><circle cx="414.4" cy="33.6" r="1.3" fill="none" stroke="#333" stroke-width="0.7"/><path d="M413.4 36.8 l-5.4 -3.2 M413.4 34.4 l-5.4 3.2" stroke="#333" stroke-width="0.8"/><path d="M407.2 29.6 v3 M407.2 37.6 v2.4" stroke="#2f78e0" stroke-width="0.8"/><circle cx="424.4" cy="33.6" r="2.8" fill="none" stroke="#333" stroke-width="0.9"/><path d="M426.6 35.6 l4 3.6" stroke="#333" stroke-width="1.2"/><path d="M421 32.8 l2 2" stroke="#333" stroke-width="0.8"/><path d="M437 30.8 h8" stroke="#b9d3f3" stroke-width="0.9"/><path d="M441 32.4 v6.6 M438.6 35 h4.8 M439 39.4 h4" stroke="#c4c4c4" stroke-width="0.8"/><path d="M452 39.6 v-8 h7 M457.6 30.2 l1.6 1.4 l-1.6 1.4 M450.6 38 l1.4 1.6 l1.4 -1.6" fill="none" stroke="#333" stroke-width="0.85"/><path d="M466 39.4 c0 -4.6 2.4 -7.4 6.6 -7.6 M471 30.2 l1.8 1.6 l-1.8 1.6 M464.6 37.8 l1.4 1.6 l1.4 -1.6" fill="none" stroke="#333" stroke-width="0.85"/><rect x="480.6" y="30.8" width="8.8" height="8.8" fill="none" stroke="#c4c4c4" stroke-width="0.8"/><rect x="482" y="32.2" width="3" height="3" fill="#dcdcdc"/><rect x="486" y="36.2" width="2.6" height="2.6" fill="#dcdcdc"/><path d="M494.6 35.8 l4.8 -4.6 l4.8 4.6 M496 35 v5 h6.8 v-5 M498 40 v-2.6 h2.8 V40" fill="none" stroke="#111" stroke-width="1"/><path d="M514.6 39.8 v-8.6 h5.4 v3.6 h-5.4" fill="none" stroke="#333" stroke-width="0.9"/><path d="M529.6 39.8 v-8.6 h5 v3.4 h-5" fill="none" stroke="#333" stroke-width="0.9"/><rect x="533.2" y="35.4" width="4.8" height="4.8" fill="#2f78e0"/><path d="M534 37 h3.2 M534 38.6 h3.2" stroke="#fff" stroke-width="0.5"/><path d="M544 38.6 a2.6 2.6 0 0 1 0.4 -5 a3.4 3.4 0 0 1 6.6 0.2 a2.4 2.4 0 0 1 0.4 4.8 Z" fill="none" stroke="#333" stroke-width="0.85"/><rect x="548.4" y="36" width="5" height="4.4" rx="0.6" fill="#2f78e0"/><rect x="549.6" y="37.2" width="2.6" height="2" fill="#fff"/><path d="M566.6 33 l1.6 -1.6 h6.4 v5.6 l-1.6 1.6 h-6.4 Z M566.6 33 h6.4 v5.6 M573 33 l1.6 -1.6 M568.6 35 v3.6 M570.8 35 v3.6" fill="none" stroke="#333" stroke-width="0.7"/><path d="M593.6 32.6 l1.4 -1.4 h5.4 v5 l-1.4 1.4 h-5.4 Z M593.6 32.6 h5.4 v5" fill="none" stroke="#333" stroke-width="0.7"/><rect x="598" y="34.2" width="4.4" height="6" fill="#f0f0f0" stroke="#333" stroke-width="0.7"/><path d="M599 36 h2.4 M599 37.6 h2.4" stroke="#2f78e0" stroke-width="0.6"/><path d="M612.4 39.6 v-6 a2.4 2.4 0 0 1 4.6 -0.6 M610.8 38 l1.6 1.8 l1.6 -1.8 M615.6 31.2 l1.6 1.8 l-2.2 0.4" fill="none" stroke="#333" stroke-width="0.85"/><rect x="616" y="36" width="4.6" height="4" rx="0.5" fill="#2f78e0"/><rect x="617" y="37" width="2.6" height="2" fill="#cfe3fa"/><rect x="628" y="31.4" width="8.6" height="6.4" rx="1" fill="none" stroke="#333" stroke-width="0.85"/><path d="M632.3 30.4 v9" stroke="#333" stroke-width="0.7"/><path d="M628.6 39.8 h7.6 M635.2 38.8 l1.2 1 l-1.2 1" fill="none" stroke="#2f78e0" stroke-width="0.7"/></svg><div class="r" style="left:2.70px;top:48.00px;width:1.00px;height:9.00px;background:#9a9a9a;"></div><svg class="r" style="left:6.00px;top:47.00px;" width="30" height="11" viewBox="0 0 30 11"><circle cx="5" cy="4.6" r="2.4" fill="none" stroke="#bfc4cc" stroke-width="0.8"/><circle cx="7.2" cy="6" r="2.2" fill="#e4ecf7" stroke="#b9d3f3" stroke-width="0.8"/><circle cx="21" cy="4.2" r="2.2" fill="none" stroke="#bfc4cc" stroke-width="0.8"/><circle cx="23" cy="6" r="2.2" fill="#e4ecf7" stroke="#b9d3f3" stroke-width="0.8"/><rect x="23.4" y="6.6" width="2.8" height="2.4" fill="none" stroke="#bfc4cc" stroke-width="0.6"/></svg><div class="r" style="left:109.50px;top:60.00px;width:1.00px;height:32.00px;background:#c8c8c8;"></div><div class="r" style="left:216.50px;top:60.00px;width:1.00px;height:32.00px;background:#c8c8c8;"></div><div class="r" style="left:326.50px;top:60.00px;width:1.00px;height:32.00px;background:#c8c8c8;"></div><div class="r" style="left:434.50px;top:60.00px;width:1.00px;height:32.00px;background:#c8c8c8;"></div><div class="r" style="left:543.50px;top:60.00px;width:1.00px;height:32.00px;background:#c8c8c8;"></div><div class="r" style="left:651.50px;top:60.00px;width:1.00px;height:32.00px;background:#c8c8c8;"></div><div class="r" style="left:759.50px;top:60.00px;width:1.00px;height:32.00px;background:#c8c8c8;"></div><div class="r" style="left:0.00px;top:58.50px;width:800.00px;height:0.70px;background:#dcdcdc;"></div><div class="r" style="left:2.10px;top:72.00px;width:1.00px;height:19.00px;background:#9a9a9a;"></div><div class="t" style="left:5.80px;top:62.63px;font-size:5.40px;line-height:6.20px;color:#111;transform:scaleX(0.9100);transform-origin:0 0;">Main:</div><div class="t" style="left:113.80px;top:62.63px;font-size:5.40px;line-height:6.20px;color:#111;transform:scaleX(0.8809);transform-origin:0 0;">Layer:</div><div class="t" style="left:222.00px;top:62.63px;font-size:5.40px;line-height:6.20px;color:#111;transform:scaleX(0.9586);transform-origin:0 0;">Element:</div><div class="t" style="left:330.00px;top:62.63px;font-size:5.40px;line-height:6.20px;color:#111;transform:scaleX(0.9741);transform-origin:0 0;">Geometry Method:</div><div class="t" style="left:438.80px;top:62.63px;font-size:5.40px;line-height:6.20px;color:#111;transform:scaleX(0.9189);transform-origin:0 0;">Floor Plan and Section:</div><div class="t" style="left:547.00px;top:62.63px;font-size:5.40px;line-height:6.20px;color:#111;transform:scaleX(0.8971);transform-origin:0 0;">Linked Stories:</div><div class="t" style="left:655.40px;top:62.63px;font-size:5.40px;line-height:6.20px;color:#111;transform:scaleX(0.9573);transform-origin:0 0;">Bottom and Top:</div><div class="t" style="left:764.00px;top:62.63px;font-size:5.40px;line-height:6.20px;color:#111;transform:scaleX(0.8344);transform-origin:0 0;">Size:</div><div class="t" style="left:5.80px;top:72.33px;font-size:5.40px;line-height:6.20px;color:#111;transform:scaleX(0.8994);transform-origin:0 0;">All Selected: 1</div><div class="r" style="left:6.00px;top:80.60px;width:22.60px;height:9.40px;background:#dadada;"></div><div class="r" style="left:30.60px;top:80.60px;width:22.60px;height:9.40px;background:#dadada;"></div><div class="r" style="left:55.00px;top:80.30px;width:23.60px;height:10.00px;background:#cce4f7;border:0.8px solid #3a84d8;"></div><div class="r" style="left:80.00px;top:75.00px;width:28.50px;height:16.50px;background:#dcdcdc;"></div><div class="r" style="left:115.00px;top:75.40px;width:100.50px;height:15.80px;background:#dbdbdb;border:0.6px solid #c2c2c2;"></div><div class="r" style="left:317.00px;top:75.40px;width:8.20px;height:15.80px;background:#dbdbdb;border:0.6px solid #c2c2c2;"></div><div class="r" style="left:439.00px;top:75.40px;width:102.50px;height:15.80px;background:#dbdbdb;border:0.6px solid #c2c2c2;"></div><div class="r" style="left:641.00px;top:84.20px;width:9.00px;height:9.00px;background:#dcdcdc;border:0.6px solid #aaa;"></div><div class="r" style="left:750.00px;top:78.60px;width:8.40px;height:9.20px;background:#dcdcdc;border:0.6px solid #aaa;"></div><div class="r" style="left:681.00px;top:71.60px;width:65.50px;height:10.80px;background:#fff;border:0.8px solid #a6a6a6;border-bottom:1.4px solid #b8b8b8;"></div><div class="r" style="left:681.00px;top:83.80px;width:65.50px;height:10.60px;background:#fff;border:0.8px solid #a6a6a6;"></div><div class="r" style="left:789.50px;top:71.60px;width:12.00px;height:10.60px;background:#f4f4f4;border:0.8px solid #c8c8c8;"></div><div class="r" style="left:789.50px;top:83.60px;width:12.00px;height:10.60px;background:#f4f4f4;border:0.8px solid #c8c8c8;"></div><div class="t" style="left:684.00px;top:74.01px;font-size:6.50px;line-height:7.47px;color:#222;">500,00</div><div class="t" style="left:684.00px;top:86.01px;font-size:6.50px;line-height:7.47px;color:#222;">-499,20</div><div class="t" style="left:793.00px;top:73.94px;font-size:6.80px;line-height:7.81px;color:#8a8a8a;">1,0</div><div class="t" style="left:793.00px;top:85.94px;font-size:6.80px;line-height:7.81px;color:#8a8a8a;">1,0</div><div class="t" style="left:130.00px;top:79.24px;font-size:6.80px;line-height:7.81px;color:#222;transform:scaleX(0.9363);transform-origin:0 0;">000 A1 Wasse...I.IFC Model</div><div class="t" style="left:222.00px;top:79.71px;font-size:6.50px;line-height:7.47px;color:#111;font-weight:bold;transform:scaleX(0.9620);transform-origin:0 0;">Rohr stehend 20</div><div class="t" style="left:455.60px;top:79.24px;font-size:6.80px;line-height:7.81px;color:#222;transform:scaleX(0.9874);transform-origin:0 0;">Floor Plan and Section...</div><div class="t" style="left:547.00px;top:74.22px;font-size:6.60px;line-height:7.58px;color:#222;transform:scaleX(0.9685);transform-origin:0 0;">Home Story:</div><div class="t" style="left:572.30px;top:85.42px;font-size:6.60px;line-height:7.58px;color:#222;transform:scaleX(0.9743);transform-origin:0 0;">0. Rez-de-chaussée</div><svg class="r" style="left:23.00px;top:83.60px;" width="3.2" height="4.0" viewBox="0 0 4 5"><path d="M0.5 0 L3.5 2.5 L0.5 5 Z" fill="#222"/></svg><svg class="r" style="left:47.80px;top:83.60px;" width="3.2" height="4.0" viewBox="0 0 4 5"><path d="M0.5 0 L3.5 2.5 L0.5 5 Z" fill="#222"/></svg><svg class="r" style="left:211.00px;top:81.80px;" width="3.2" height="4.0" viewBox="0 0 4 5"><path d="M0.5 0 L3.5 2.5 L0.5 5 Z" fill="#222"/></svg><svg class="r" style="left:319.60px;top:81.80px;" width="3.2" height="4.0" viewBox="0 0 4 5"><path d="M0.5 0 L3.5 2.5 L0.5 5 Z" fill="#222"/></svg><svg class="r" style="left:536.00px;top:81.80px;" width="3.2" height="4.0" viewBox="0 0 4 5"><path d="M0.5 0 L3.5 2.5 L0.5 5 Z" fill="#222"/></svg><svg class="r" style="left:644.00px;top:86.80px;" width="3.2" height="4.0" viewBox="0 0 4 5"><path d="M0.5 0 L3.5 2.5 L0.5 5 Z" fill="#222"/></svg><svg class="r" style="left:752.70px;top:81.30px;" width="3.2" height="4.0" viewBox="0 0 4 5"><path d="M0.5 0 L3.5 2.5 L0.5 5 Z" fill="#222"/></svg><svg class="r" style="left:101.05px;top:81.95px;" width="4.5" height="2.7" viewBox="0 0 5 3"><path d="M0 0 L5 0 L2.5 3 Z" fill="#222"/></svg><svg class="r" style="left:0.00px;top:58.00px;" width="800" height="36" viewBox="0 58 800 36"><path d="M10 87.6 l3 -3 l1.6 1.6 M10.6 88 h7.6 M16 84 v3" fill="none" stroke="#333" stroke-width="0.8"/><rect x="34.2" y="82.6" width="8" height="5.4" fill="none" stroke="#333" stroke-width="0.7" stroke-dasharray="1.4 0.9"/><path d="M42.6 82.4 l2.4 1 l-1.4 0.8 Z" fill="#111"/><circle cx="66.6" cy="86.2" r="2.6" fill="none" stroke="#333" stroke-width="0.8"/><path d="M64.2 84.4 l2.4 -2.2 l2.4 2.2" fill="none" stroke="#333" stroke-width="0.8"/><path d="M66.6 88.8 c2.6 0.8 4.6 -0.6 4.2 -3" fill="none" stroke="#333" stroke-width="0.8"/><path d="M87.4 82.6 v-3 a1 1 0 0 1 1 -1 h2.6 a1 1 0 0 1 1 1 v3 M86.6 85 v-1.4 a1 1 0 0 1 1 -1 h5.6 a1 1 0 0 1 1 1 v1.4 Z M87.4 85 v5.2 M94 85 v5.2 M89.4 85 v3.6" fill="none" stroke="#444" stroke-width="0.85"/><path d="M119.6 83.8 c2 -2.8 6.4 -2.8 8.4 0 c-2 2.8 -6.4 2.8 -8.4 0 Z" fill="none" stroke="#333" stroke-width="0.75"/><circle cx="123.8" cy="83.8" r="1.3" fill="none" stroke="#333" stroke-width="0.7"/><path d="M338.9 82 l1.6 -1.6 h5.4 v5.6 l-1.6 1.6 h-5.4 Z M338.9 82 h5.4 v5.6 M344.3 82 l1.6 -1.6" fill="none" stroke="#d2d2d2" stroke-width="0.8"/><path d="M365.4 82 l1.6 -1.6 h5.4 v5.6 l-1.6 1.6 h-5.4 Z M365.4 82 h5.4 v5.6 M370.8 82 l1.6 -1.6" fill="none" stroke="#d2d2d2" stroke-width="0.8"/><path d="M391.9 82 l1.6 -1.6 h5.4 v5.6 l-1.6 1.6 h-5.4 Z M391.9 82 h5.4 v5.6 M397.3 82 l1.6 -1.6" fill="none" stroke="#d2d2d2" stroke-width="0.8"/><path d="M416.6 83 l3 -2.4 l3 2.4 l-0.6 4 l-4.6 0.6 Z" fill="none" stroke="#d4d4d4" stroke-width="0.8"/><rect x="443" y="79.6" width="9.6" height="7.6" rx="0.8" fill="none" stroke="#333" stroke-width="0.9"/><path d="M448.6 79.6 v7.6 M450 81.6 h1.6 M450 83.4 h1.6 M450 85.2 h1.6" stroke="#333" stroke-width="0.7"/><path d="M552.6 91.8 h9 M554.6 91.6 l2.4 -2.6 l2.4 2.6" fill="none" stroke="#444" stroke-width="0.7"/><path d="M657.6 80.4 l2.2 -2.6 h6.6 v7 l-2.2 2.6 h-6.6 Z M657.6 80.4 h6.6 v7 M664.2 80.4 l2.2 -2.6" fill="#f4f4f4" stroke="#333" stroke-width="0.9"/><path d="M657 90.8 c2.6 1.2 7.4 1.2 10 -0.2" fill="none" stroke="#9a9a9a" stroke-width="1.6"/><path d="M677.4 79.6 v12 M676 81.2 l1.4 -1.6 l1.4 1.6 M676 84.4 l1.4 1.6 l1.4 -1.6 M676 87.2 l1.4 -1.6 M678.8 87.2 l-1.4 -1.6 M676 90 l1.4 1.6 l1.4 -1.6" fill="none" stroke="#222" stroke-width="0.7"/><path d="M667 79.4 h9 M665 85.8 h11 M668 91.8 h8" fill="none" stroke="#333" stroke-width="0.6" stroke-dasharray="1.1 0.7"/><rect x="770.4" y="82.4" width="7" height="7" rx="0.8" fill="none" stroke="#333" stroke-width="0.8"/><path d="M772.4 84.4 l3 3 M775.4 84.4 l-3 3" stroke="#333" stroke-width="0.7"/><path d="M770.4 78.6 h7 M771.6 77.4 l-1.2 1.2 l1.2 1.2 M776.2 77.4 l1.2 1.2 l-1.2 1.2 M781.2 82.4 v7 M780 83.6 l1.2 -1.2 l1.2 1.2 M780 88.2 l1.2 1.2 l1.2 -1.2" fill="none" stroke="#222" stroke-width="0.7"/><path d="M778 82.4 h2.4 M778 89.4 h2.4" stroke="#555" stroke-width="0.5" stroke-dasharray="0.8 0.6"/></svg><div class="r" style="left:4.00px;top:110.60px;width:64.00px;height:3.30px;background:#c9c9c9;"></div><div class="r" style="left:612.00px;top:110.60px;width:56.00px;height:1.20px;background:#f8f8f8;"></div><div class="r" style="left:612.00px;top:113.00px;width:56.00px;height:1.20px;background:#f8f8f8;"></div><div class="r" style="left:0.00px;top:114.80px;width:668.00px;height:13.20px;background:#d9d9d9;"></div><div class="r" style="left:640.00px;top:114.80px;width:28.00px;height:13.20px;background:#ececec;"></div><div class="r" style="left:190.60px;top:115.20px;width:177.80px;height:12.80px;background:#ffffff;"></div><div class="r" style="left:368.40px;top:115.20px;width:0.80px;height:12.80px;background:#b0b0b0;"></div><svg class="r" style="left:0.00px;top:115.00px;" width="668" height="13" viewBox="0 115 668 13"><rect x="2.6" y="118.6" width="3.8" height="3" fill="none" stroke="#444" stroke-width="0.7"/><rect x="8" y="118.6" width="3.8" height="3" fill="none" stroke="#444" stroke-width="0.7"/><rect x="2.6" y="122.8" width="3.8" height="3" fill="none" stroke="#444" stroke-width="0.7"/><rect x="8" y="122.8" width="3.8" height="3" fill="none" stroke="#444" stroke-width="0.7"/><path d="M17.6 118.6 h3.4 v2.2 h5 v5.2 h-8.4 Z" fill="#fff" stroke="#333" stroke-width="0.8"/><path d="M194.6 121 l2 -2.2 h4.6 l2 2.2 v4.8 h-8.6 Z M194.6 121 h8.6" fill="#fff" stroke="#333" stroke-width="0.8"/><path d="M358.2 119.8 l3 3 M361.2 119.8 l-3 3" stroke="#222" stroke-width="0.8"/><path d="M372.4 126 v-3.2 a2 2.2 0 0 1 4 0 v3.2 Z M371.6 126.2 h5.6 M373.6 123 v3 M375.2 123 v3" fill="none" stroke="#333" stroke-width="0.75"/><circle cx="377.6" cy="118.6" r="1.1" fill="#e8231a"/><path d="M643.6 125.8 v-4.2 l2 -2.2 l2 2.2 v4.2 Z M647.6 121.6 l1 -1 a2.2 2.2 0 0 1 3.6 0.4 a2 2 0 0 1 2.4 2 a1.6 1.6 0 0 1 -0.6 2.8 h-6.4" fill="#dcebfb" stroke="#3f8ae6" stroke-width="0.9"/></svg><svg class="r" style="left:659.23px;top:120.78px;" width="4.75" height="2.8499999999999996" viewBox="0 0 5 3"><path d="M0 0 L5 0 L2.5 3 Z" fill="#222"/></svg><div class="t" style="left:28.60px;top:119.40px;font-size:6.30px;line-height:7.24px;color:#222;">[0. Rez-de-chaussée]</div><div class="t" style="left:204.80px;top:119.40px;font-size:6.30px;line-height:7.24px;color:#222;transform:scaleX(1.0593);transform-origin:0 0;">[S-16 Building Section]</div><div class="t" style="left:379.60px;top:119.40px;font-size:6.30px;line-height:7.24px;color:#222;transform:scaleX(1.0323);transform-origin:0 0;">[Action Center]</div><div class="r" style="left:67.80px;top:91.60px;width:544.80px;height:22.90px;background:#f1f1f1;border:1px solid #fbfbfb;border-top:1.8px solid #fdfdfd;box-shadow:0 0.3px 1.6px rgba(0,0,0,.55);"></div><div class="r" style="left:69.80px;top:96.60px;width:6.00px;height:6.00px;background:#dc3545;"></div><svg class="r" style="left:69.80px;top:96.60px;" width="6" height="6" viewBox="0 0 6 6"><path d="M1.6 1.6 l2.8 2.8 M4.4 1.6 l-2.8 2.8" stroke="#fff" stroke-width="0.9"/></svg><div class="t" style="left:97.20px;top:100.98px;font-size:7.40px;line-height:8.50px;color:#222;transform:scaleX(0.9496);transform-origin:0 0;">Open 3D Window</div><div class="r" style="left:158.10px;top:95.50px;width:1.00px;height:15.00px;background:#c6c6c6;"></div><div class="r" style="left:225.70px;top:95.50px;width:1.00px;height:15.00px;background:#c6c6c6;"></div><div class="r" style="left:263.80px;top:95.50px;width:1.00px;height:15.00px;background:#c6c6c6;"></div><div class="r" style="left:353.70px;top:95.50px;width:1.00px;height:15.00px;background:#c6c6c6;"></div><div class="r" style="left:387.10px;top:95.50px;width:1.00px;height:15.00px;background:#c6c6c6;"></div><div class="r" style="left:468.10px;top:95.50px;width:1.00px;height:15.00px;background:#c6c6c6;"></div><div class="r" style="left:505.80px;top:95.50px;width:1.00px;height:15.00px;background:#c6c6c6;"></div><div class="r" style="left:573.50px;top:95.50px;width:1.00px;height:15.00px;background:#c6c6c6;"></div><svg class="r" style="left:217.82px;top:102.88px;" width="4.75" height="2.8499999999999996" viewBox="0 0 5 3"><path d="M0 0 L5 0 L2.5 3 Z" fill="#222"/></svg><svg class="r" style="left:379.62px;top:102.88px;" width="4.75" height="2.8499999999999996" viewBox="0 0 5 3"><path d="M0 0 L5 0 L2.5 3 Z" fill="#222"/></svg><svg class="r" style="left:413.23px;top:102.88px;" width="4.75" height="2.8499999999999996" viewBox="0 0 5 3"><path d="M0 0 L5 0 L2.5 3 Z" fill="#222"/></svg><svg class="r" style="left:459.62px;top:102.88px;" width="4.75" height="2.8499999999999996" viewBox="0 0 5 3"><path d="M0 0 L5 0 L2.5 3 Z" fill="#222"/></svg><svg class="r" style="left:532.92px;top:102.88px;" width="4.75" height="2.8499999999999996" viewBox="0 0 5 3"><path d="M0 0 L5 0 L2.5 3 Z" fill="#222"/></svg><svg class="r" style="left:68.00px;top:92.00px;" width="544" height="22" viewBox="68 92 544 22"><rect x="84.4" y="99.6" width="10.4" height="10" rx="1" fill="#f1f1f1" stroke="#222" stroke-width="1"/><path d="M84.4 101.8 h10.4" stroke="#222" stroke-width="1.2"/><path d="M86.6 105.2 l1.6 -1.6 h4 v3.6 l-1.6 1.6 h-4 Z M86.6 105.2 h4 v3.6 M90.6 105.2 l1.6 -1.6" fill="none" stroke="#222" stroke-width="0.7"/><path d="M164.6 100.6 l5 -1 l2.2 1 v7 l-2.2 1 l-5 -1 Z M169.6 99.6 v9" fill="none" stroke="#333" stroke-width="0.85"/><path d="M181 101.6 l2.4 -2 h6 v6 l-2.4 2 h-6 Z M181 101.6 h6 v6 M187 101.6 l2.4 -2" fill="none" stroke="#333" stroke-width="0.85"/><path d="M204.2 98.6 v3 M200.4 108 l3.8 -6.4 l3.8 6.4 M200 106.6 c2.4 2 6 2 8.4 0 M202.8 99.8 l1.4 -1.4 l1.4 1.4 M207.4 105 l1.6 1.4 l-1.4 1.4" fill="none" stroke="#333" stroke-width="0.8"/><circle cx="236" cy="99.6" r="1" fill="none" stroke="#c4c4c4" stroke-width="0.7"/><path d="M236 100.8 v4 l-1.4 3.6 M236 104.8 l1.4 3.6 M234 102.2 l2 -0.8 l2 1" fill="none" stroke="#c4c4c4" stroke-width="0.8"/><ellipse cx="253" cy="102.6" rx="5" ry="3.2" fill="none" stroke="#bcd5f5" stroke-width="0.9"/><path d="M250.6 102 l2.4 -1.2 l2.4 1.2 v2.6 l-2.4 1.2 l-2.4 -1.2 Z" fill="none" stroke="#c8c8c8" stroke-width="0.7"/><circle cx="273.6" cy="104" r="4" fill="none" stroke="#c4c4c4" stroke-width="0.8"/><path d="M269.6 104 h8 M273.6 100 v8" stroke="#c4c4c4" stroke-width="0.7"/><rect x="286.4" y="99.6" width="9.4" height="8.8" fill="none" stroke="#c4c4c4" stroke-width="0.8" stroke-dasharray="2 1.2"/><path d="M288.6 107 v-3 l2.6 -2.2 l2.6 2.2 v3 Z" fill="none" stroke="#c4c4c4" stroke-width="0.8"/><circle cx="308.2" cy="101" r="1.6" fill="none" stroke="#c4c4c4" stroke-width="0.8"/><path d="M304 104 h8.4 M308.2 102.8 v2.4 l-3 3.6 M308.2 105.2 l3 3.6" fill="none" stroke="#c4c4c4" stroke-width="0.8"/><path d="M322.6 101.4 a4 2 0 0 1 7 0" fill="none" stroke="#bcd5f5" stroke-width="0.9"/><circle cx="324.6" cy="105.6" r="2" fill="none" stroke="#c4c4c4" stroke-width="0.8"/><circle cx="328" cy="105" r="2" fill="none" stroke="#c4c4c4" stroke-width="0.8"/><path d="M339 104 h2 l2 -2.4 v4.8 l-2 -2.4 M347.4 104 h-2 l-2 -2.4 M343.4 106.4 l2 -2.4" fill="none" stroke="#c4c4c4" stroke-width="0.8"/><path d="M362.6 103.4 v-3 h5.4 v3" fill="none" stroke="#444" stroke-width="0.8"/><rect x="361.6" y="101.8" width="5" height="4.6" fill="#f3f3f3" stroke="#444" stroke-width="0.8"/><rect x="365" y="103.8" width="6.4" height="4.6" rx="0.6" fill="#3f8ae6"/><rect x="366.2" y="105" width="4" height="2.2" fill="#dcebfb"/><rect x="396" y="100" width="4.2" height="4.2" fill="none" stroke="#999" stroke-width="0.7"/><circle cx="399.6" cy="103.2" r="0.9" fill="#222"/><circle cx="402.8" cy="103.2" r="0.9" fill="#222"/><circle cx="399.6" cy="106.4" r="0.9" fill="#222"/><circle cx="402.8" cy="106.4" r="0.9" fill="#222"/><circle cx="401.2" cy="108.4" r="0.8" fill="#222"/><circle cx="404.2" cy="104.8" r="0.8" fill="#222"/><path d="M422.6 103.4 l3.4 -3 l3.6 2.6 v4 l-3 1 l-4 -1.6 Z M426 100.4 v4" fill="none" stroke="#444" stroke-width="0.8"/><path d="M428.6 105.2 l2 1.6 l-0.6 2 h-2.2 l-0.6 -2 Z" fill="#3f8ae6"/><path d="M441.6 103.8 l3.4 -2.6 l3.4 2.6 v4 h-6.8 Z" fill="none" stroke="#444" stroke-width="0.8"/><path d="M445.6 101 l3.8 -1.4 l2.4 4.4 l-4 3.4 Z" fill="none" stroke="#3f8ae6" stroke-width="1.1"/><path d="M476.6 100 h3 v4 h-3 Z M474.6 104 h7 v2 h-7 Z M475.2 106 v2.8 h5.8 V106" fill="none" stroke="#333" stroke-width="0.8"/><path d="M491 102.8 h2.4 v3 h-2.4 Z M489.6 105.8 h5.4 v3 h-5.4 Z M497.6 100.4 v2 M496.4 104 h2.6 v4.6 h-2.6 Z" fill="none" stroke="#c4c4c4" stroke-width="0.8"/><rect x="514" y="100.6" width="10" height="7.4" rx="1.2" fill="none" stroke="#333" stroke-width="0.9"/><circle cx="519" cy="104.4" r="2.1" fill="none" stroke="#333" stroke-width="0.8"/><path d="M517 100.6 l0.8 -1.2 h2.4 l0.8 1.2" fill="none" stroke="#333" stroke-width="0.8"/><rect x="541.4" y="100.4" width="7.6" height="5.6" rx="1" fill="none" stroke="#333" stroke-width="0.8"/><circle cx="545.2" cy="103.2" r="1.4" fill="none" stroke="#333" stroke-width="0.7"/><rect x="546.4" y="104.2" width="5" height="4.4" rx="0.6" fill="#3f8ae6"/><rect x="547.4" y="105.2" width="3" height="2.2" fill="#dcebfb"/><path d="M559.6 108.2 v-3.4 l3.2 -2.8 l3.2 2.8 v3.4 Z M562 108.2 v-2.2 h1.6 v2.2" fill="none" stroke="#333" stroke-width="0.75"/><path d="M558.6 101.6 l1.2 -1.6 l1.2 1 M567 101.6 l-1.2 -1.6 l-1.2 1 M558.6 107 v1.8 h1.4 M567 107 v1.8 h-1.4" fill="none" stroke="#3f8ae6" stroke-width="0.8"/><rect x="582.4" y="102.4" width="5.6" height="4.4" rx="0.8" fill="none" stroke="#333" stroke-width="0.8"/><path d="M588 104 l2.6 -1.4 v4 l-2.6 -1.4" fill="none" stroke="#333" stroke-width="0.8"/><path d="M580.6 102.4 a3 3 0 0 1 3 -2.4" fill="none" stroke="#3f8ae6" stroke-width="0.8"/><circle cx="597.2" cy="102" r="1.6" fill="none" stroke="#333" stroke-width="0.7"/><circle cx="600.2" cy="103.6" r="1.6" fill="none" stroke="#333" stroke-width="0.7"/><rect x="598.6" y="104.6" width="4.6" height="3.8" rx="0.5" fill="#f3f3f3" stroke="#333" stroke-width="0.7"/><path d="M599.6 106.6 h2.6" stroke="#333" stroke-width="0.5"/></svg>
</body></html>
